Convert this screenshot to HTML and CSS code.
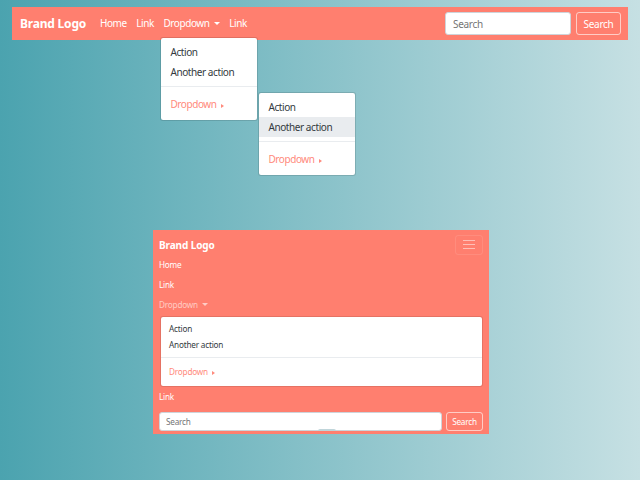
FILE: index.html
```html
<!DOCTYPE html>
<html lang="en">
<head>
  <meta charset="UTF-8" />
  <title>Navbar</title>
  <link rel="stylesheet" href="styles.css">
</head>
<body>
  <nav class="navbar">
    <a class="brand">Brand Logo</a>
    <ul class="nav-links">
      <li>Home</li>
      <li>Link</li>
      <li class="has-menu">
        Dropdown <span class="caret"></span>
        <div class="menu menu-main">
          <div class="menu-item">Action</div>
          <div class="menu-item">Another action</div>
          <div class="divider"></div>
          <div class="menu-item accent">Dropdown <span class="caret-right"></span></div>
          <div class="menu menu-sub">
            <div class="menu-item">Action</div>
            <div class="menu-item active">Another action</div>
            <div class="divider"></div>
            <div class="menu-item accent">Dropdown <span class="caret-right"></span></div>
          </div>
        </div>
      </li>
      <li>Link</li>
    </ul>
    <form class="search">
      <input type="text" placeholder="Search" />
      <button type="button">Search</button>
    </form>
  </nav>

  <div class="phone-wrap">
    <nav class="navbar-small">
      <div class="small-head">
        <a class="brand-small">Brand Logo</a>
        <button type="button" class="toggler"><span></span><span></span><span></span></button>
      </div>
      <div class="small-link">Home</div>
      <div class="small-link">Link</div>
      <div class="small-link dim">Dropdown <span class="caret"></span></div>
      <div class="small-menu">
        <div class="small-item">Action</div>
        <div class="small-item">Another action</div>
        <div class="divider"></div>
        <div class="small-item accent">Dropdown <span class="caret-right"></span></div>
      </div>
      <div class="small-link">Link</div>
      <form class="small-search">
        <input type="text" placeholder="Search" />
        <button type="button">Search</button>
      </form>
    </nav>
    <span class="blob"></span>
  </div>
</body>
</html>
```

FILE: styles.css
```css
html, body {
  height: 100%;
}

body {
  margin: 0;
  overflow: hidden;
  font-family: "Noto Sans", sans-serif;
  color: #343a40;
  background: linear-gradient(to right, #4ba3af, #c6e0e3);
}

ul {
  margin: 0;
  padding: 0;
  list-style: none;
}

.navbar {
  display: flex;
  align-items: center;
  height: 33px;
  margin: 7px 12px 0;
  padding: 0 7px 0 8px;
  background-color: #ff7f6f;
  color: #fff;
}

.brand {
  width: 80px;
  font-size: 12px;
  font-weight: 700;
  letter-spacing: -0.2px;
}

.nav-links {
  display: flex;
  gap: 9.5px;
  font-size: 10px;
  line-height: 15px;
  letter-spacing: -0.42px;
}

.has-menu {
  position: relative;
}

.caret {
  display: inline-block;
  margin-left: 2px;
  vertical-align: 2px;
  border-top: 3px solid currentColor;
  border-left: 3px solid transparent;
  border-right: 3px solid transparent;
}

.caret-right {
  display: inline-block;
  margin-left: 2px;
  vertical-align: 0;
  border-left: 3px solid currentColor;
  border-top: 2px solid transparent;
  border-bottom: 2px solid transparent;
}

.menu {
  position: absolute;
  width: 96px;
  padding: 4px 0 6px;
  background: #fff;
  border: 1px solid rgba(0,0,0,0.12);
  border-radius: 3px;
  background-clip: padding-box;
  color: #343a40;
}

.menu-main {
  top: 21px;
  left: -3px;
}

.menu-sub {
  top: 54px;
  left: 97px;
}

.menu-item {
  padding: 3px 9px;
  height: 14px;
  line-height: 14px;
  white-space: nowrap;
}

.menu-item.active {
  background-color: #e9ecef;
}

.accent {
  color: #ff8a7c;
}

.menu-item.accent {
  margin-top: 7px;
}

.divider {
  height: 1px;
  margin: 4px 0;
  background-color: #e9ecef;
}

.search {
  display: flex;
  gap: 5px;
  margin-left: auto;
}

.search input {
  width: 126px;
  height: 23px;
  box-sizing: border-box;
  padding: 0 7px;
  border: 1px solid #ced4da;
  border-radius: 3px;
  font: 10px "Noto Sans", sans-serif;
  letter-spacing: -0.3px;
}

.search button {
  width: 45px;
  height: 23px;
  padding: 0;
  background: transparent;
  border: 1px solid rgba(255,255,255,0.6);
  border-radius: 3px;
  color: #fff;
  font: 10px "Noto Sans", sans-serif;
  letter-spacing: -0.3px;
}

.phone-wrap {
  position: relative;
  width: 336px;
  margin: 190px 0 0 153px;
}

.navbar-small {
  display: flex;
  flex-direction: column;
  height: 204px;
  box-sizing: border-box;
  padding: 0 6px;
  background-color: #ff7f6f;
  color: #fff;
  font-size: 8.2px;
  letter-spacing: -0.2px;
}

.small-head {
  display: flex;
  align-items: center;
  justify-content: space-between;
  height: 29px;
  padding-bottom: 1px;
}

.brand-small {
  font-size: 10px;
  font-weight: 700;
  letter-spacing: -0.1px;
}

.toggler {
  display: flex;
  flex-direction: column;
  justify-content: center;
  gap: 3px;
  width: 28px;
  height: 20px;
  padding: 0 7px;
  background: transparent;
  border: 1px solid rgba(255,255,255,0.1);
  border-radius: 3px;
}

.toggler span {
  height: 1px;
  background-color: rgba(255,255,255,0.5);
}

.small-link {
  height: 20px;
  line-height: 10px;
}

.small-link.dim {
  color: rgba(255,255,255,0.6);
  height: 16px;
}

.small-menu {
  margin: 0 0 5px 1px;
  padding: 4px 0;
  background: #fff;
  border: 1px solid rgba(0,0,0,0.1);
  background-clip: padding-box;
  border-radius: 3px;
  color: #343a40;
}

.small-item {
  padding: 0 8px;
  height: 16px;
  line-height: 16px;
}

.small-item.accent {
  color: #ff8a7c;
  margin: 6px 0 2px;
}

.small-menu .divider {
  margin: 4px 0;
}

.small-search {
  display: flex;
  gap: 4px;
}

.small-search input {
  flex: 1;
  min-width: 0;
  height: 19px;
  box-sizing: border-box;
  padding: 0 6px;
  border: 1px solid #ced4da;
  border-radius: 3px;
  font: 8.2px "Noto Sans", sans-serif;
  letter-spacing: -0.2px;
}

.small-search button {
  width: 37px;
  height: 19px;
  padding: 0;
  background: transparent;
  border: 1px solid rgba(255,255,255,0.6);
  border-radius: 3px;
  color: #fff;
  font: 8.2px "Noto Sans", sans-serif;
  letter-spacing: -0.2px;
}

.blob {
  position: absolute;
  left: 165px;
  top: 199px;
  width: 18px;
  height: 2px;
  border-radius: 9px 9px 0 0;
  background-color: #c0d5da;
}
```
